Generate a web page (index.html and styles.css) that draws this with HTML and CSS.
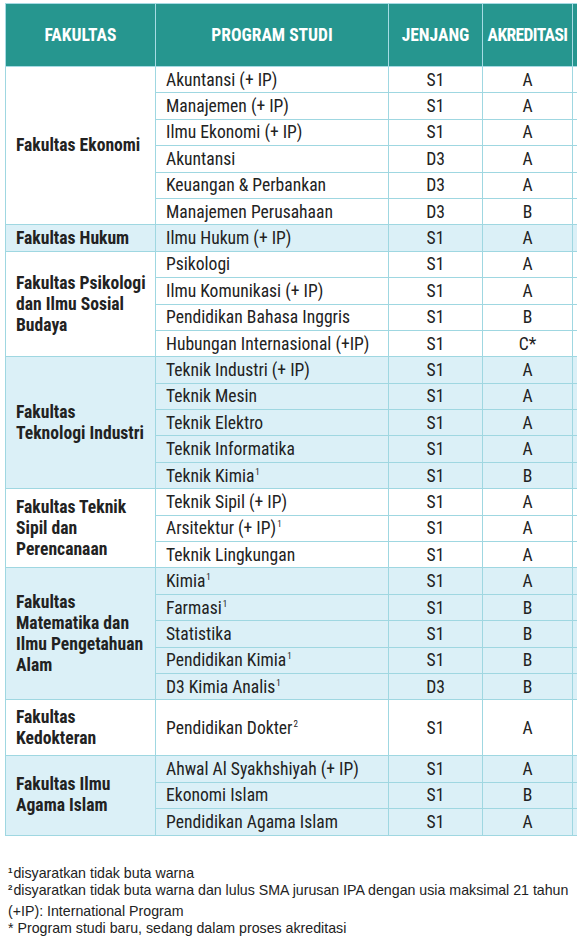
FILE: index.html
```html
<!DOCTYPE html>
<html>
<head>
<meta charset="utf-8">
<link rel="stylesheet" href="styles.css">
</head>
<body>
<div class="page">
<table class="prodi">
  <colgroup>
    <col class="c-fak"><col class="c-prog"><col class="c-jen"><col class="c-akr"><col class="c-extra">
  </colgroup>
  <thead>
    <tr>
      <th>FAKULTAS</th><th>PROGRAM STUDI</th><th>JENJANG</th><th class="tight">AKREDITASI</th><th></th>
    </tr>
  </thead>
  <tbody>
    <tr><td class="fak" rowspan="6">Fakultas Ekonomi</td><td class="prog">Akuntansi (+ IP)</td><td class="mid">S1</td><td class="mid">A</td><td></td></tr>
    <tr><td class="prog">Manajemen (+ IP)</td><td class="mid">S1</td><td class="mid">A</td><td></td></tr>
    <tr><td class="prog">Ilmu Ekonomi (+ IP)</td><td class="mid">S1</td><td class="mid">A</td><td></td></tr>
    <tr><td class="prog">Akuntansi</td><td class="mid">D3</td><td class="mid">A</td><td></td></tr>
    <tr><td class="prog">Keuangan &amp; Perbankan</td><td class="mid">D3</td><td class="mid">A</td><td></td></tr>
    <tr><td class="prog">Manajemen Perusahaan</td><td class="mid">D3</td><td class="mid">B</td><td></td></tr>

    <tr class="alt"><td class="fak">Fakultas Hukum</td><td class="prog">Ilmu Hukum (+ IP)</td><td class="mid">S1</td><td class="mid">A</td><td></td></tr>

    <tr><td class="fak" rowspan="4">Fakultas Psikologi dan Ilmu Sosial Budaya</td><td class="prog">Psikologi</td><td class="mid">S1</td><td class="mid">A</td><td></td></tr>
    <tr><td class="prog">Ilmu Komunikasi (+ IP)</td><td class="mid">S1</td><td class="mid">A</td><td></td></tr>
    <tr><td class="prog">Pendidikan Bahasa Inggris</td><td class="mid">S1</td><td class="mid">B</td><td></td></tr>
    <tr><td class="prog">Hubungan Internasional (+IP)</td><td class="mid">S1</td><td class="mid">C*</td><td></td></tr>

    <tr class="alt"><td class="fak" rowspan="5">Fakultas<br>Teknologi Industri</td><td class="prog">Teknik Industri (+ IP)</td><td class="mid">S1</td><td class="mid">A</td><td></td></tr>
    <tr class="alt"><td class="prog">Teknik Mesin</td><td class="mid">S1</td><td class="mid">A</td><td></td></tr>
    <tr class="alt"><td class="prog">Teknik Elektro</td><td class="mid">S1</td><td class="mid">A</td><td></td></tr>
    <tr class="alt"><td class="prog">Teknik Informatika</td><td class="mid">S1</td><td class="mid">A</td><td></td></tr>
    <tr class="alt"><td class="prog">Teknik Kimia<sup>1</sup></td><td class="mid">S1</td><td class="mid">B</td><td></td></tr>

    <tr><td class="fak" rowspan="3">Fakultas Teknik Sipil dan Perencanaan</td><td class="prog">Teknik Sipil (+ IP)</td><td class="mid">S1</td><td class="mid">A</td><td></td></tr>
    <tr><td class="prog">Arsitektur (+ IP)<sup>1</sup></td><td class="mid">S1</td><td class="mid">A</td><td></td></tr>
    <tr><td class="prog">Teknik Lingkungan</td><td class="mid">S1</td><td class="mid">A</td><td></td></tr>

    <tr class="alt"><td class="fak" rowspan="5">Fakultas Matematika dan Ilmu Pengetahuan Alam</td><td class="prog">Kimia<sup>1</sup></td><td class="mid">S1</td><td class="mid">A</td><td></td></tr>
    <tr class="alt"><td class="prog">Farmasi<sup>1</sup></td><td class="mid">S1</td><td class="mid">B</td><td></td></tr>
    <tr class="alt"><td class="prog">Statistika</td><td class="mid">S1</td><td class="mid">B</td><td></td></tr>
    <tr class="alt"><td class="prog">Pendidikan Kimia<sup>1</sup></td><td class="mid">S1</td><td class="mid">B</td><td></td></tr>
    <tr class="alt"><td class="prog">D3 Kimia Analis<sup>1</sup></td><td class="mid">D3</td><td class="mid">B</td><td></td></tr>

    <tr class="tall"><td class="fak">Fakultas<br>Kedokteran</td><td class="prog">Pendidikan Dokter<sup>2</sup></td><td class="mid">S1</td><td class="mid">A</td><td></td></tr>

    <tr class="alt"><td class="fak" rowspan="3">Fakultas Ilmu<br>Agama Islam</td><td class="prog">Ahwal Al Syakhshiyah (+ IP)</td><td class="mid">S1</td><td class="mid">A</td><td></td></tr>
    <tr class="alt"><td class="prog">Ekonomi Islam</td><td class="mid">S1</td><td class="mid">B</td><td></td></tr>
    <tr class="alt"><td class="prog">Pendidikan Agama Islam</td><td class="mid">S1</td><td class="mid">A</td><td></td></tr>
  </tbody>
</table>

<div class="notes">
  <div class="group">
    <p><sup>1</sup>disyaratkan tidak buta warna</p>
    <p><sup>2</sup>disyaratkan tidak buta warna dan lulus SMA jurusan IPA dengan usia maksimal 21 tahun</p>
  </div>
  <div class="group">
    <p>(+IP): International Program</p>
    <p>* Program studi baru, sedang dalam proses akreditasi</p>
  </div>
</div>
</div>
</body>
</html>
```

FILE: styles.css
```css
html, body {
  margin: 0;
  padding: 0;
  background: #ffffff;
  overflow: hidden;
}

.page {
  width: 577px;
  overflow: hidden;
  padding-top: 3px;
}

.prodi {
  margin-left: 5px;
  border-collapse: collapse;
  table-layout: fixed;
  width: 667px;
  font-family: Roboto, "Liberation Sans", sans-serif;
  font-stretch: 80%;
  color: #222222;
  font-size: 17.6px;
}

.c-fak { width: 150px; }
.c-prog { width: 233px; }
.c-jen { width: 94px; }
.c-akr { width: 90px; }
.c-extra { width: 100px; }

.prodi th {
  background: #26968f;
  color: #ffffff;
  font-weight: 700;
  font-size: 17.5px;
  height: 62px;
  padding: 0;
  text-align: center;
  border: 1px solid #a6dbe4;
  white-space: nowrap;
}

.prodi th.tight {
  letter-spacing: -0.6px;
  overflow: visible;
}

.prodi td {
  border: 1px solid #9fd7e1;
  padding: 0;
  height: 25.4px;
  line-height: 18px;
  vertical-align: middle;
}

.prodi tr.alt td {
  background: #dbf0f7;
}

.prodi tr.tall td {
  height: 55px;
}

.prodi td.fak {
  font-weight: 700;
  padding-left: 10px;
  padding-right: 4px;
  line-height: 21px;
  text-align: left;
}

.prodi td.prog {
  padding-left: 10px;
  white-space: nowrap;
}

.prodi td.mid {
  text-align: center;
}

.prodi sup {
  font-size: 9px;
  line-height: 0;
  vertical-align: 7px;
  margin-left: 1px;
}

.notes {
  margin-top: 29px;
  padding-left: 8px;
  font-family: "Liberation Sans", Arial, sans-serif;
  font-size: 14.2px;
  color: #222222;
}

.notes .group {
  margin-bottom: 4px;
}

.notes p {
  margin: 0;
  line-height: 17px;
  white-space: nowrap;
}

.notes sup {
  font-size: 8px;
  font-weight: 700;
  line-height: 0;
  vertical-align: 5px;
  margin-right: 1px;
}
```
